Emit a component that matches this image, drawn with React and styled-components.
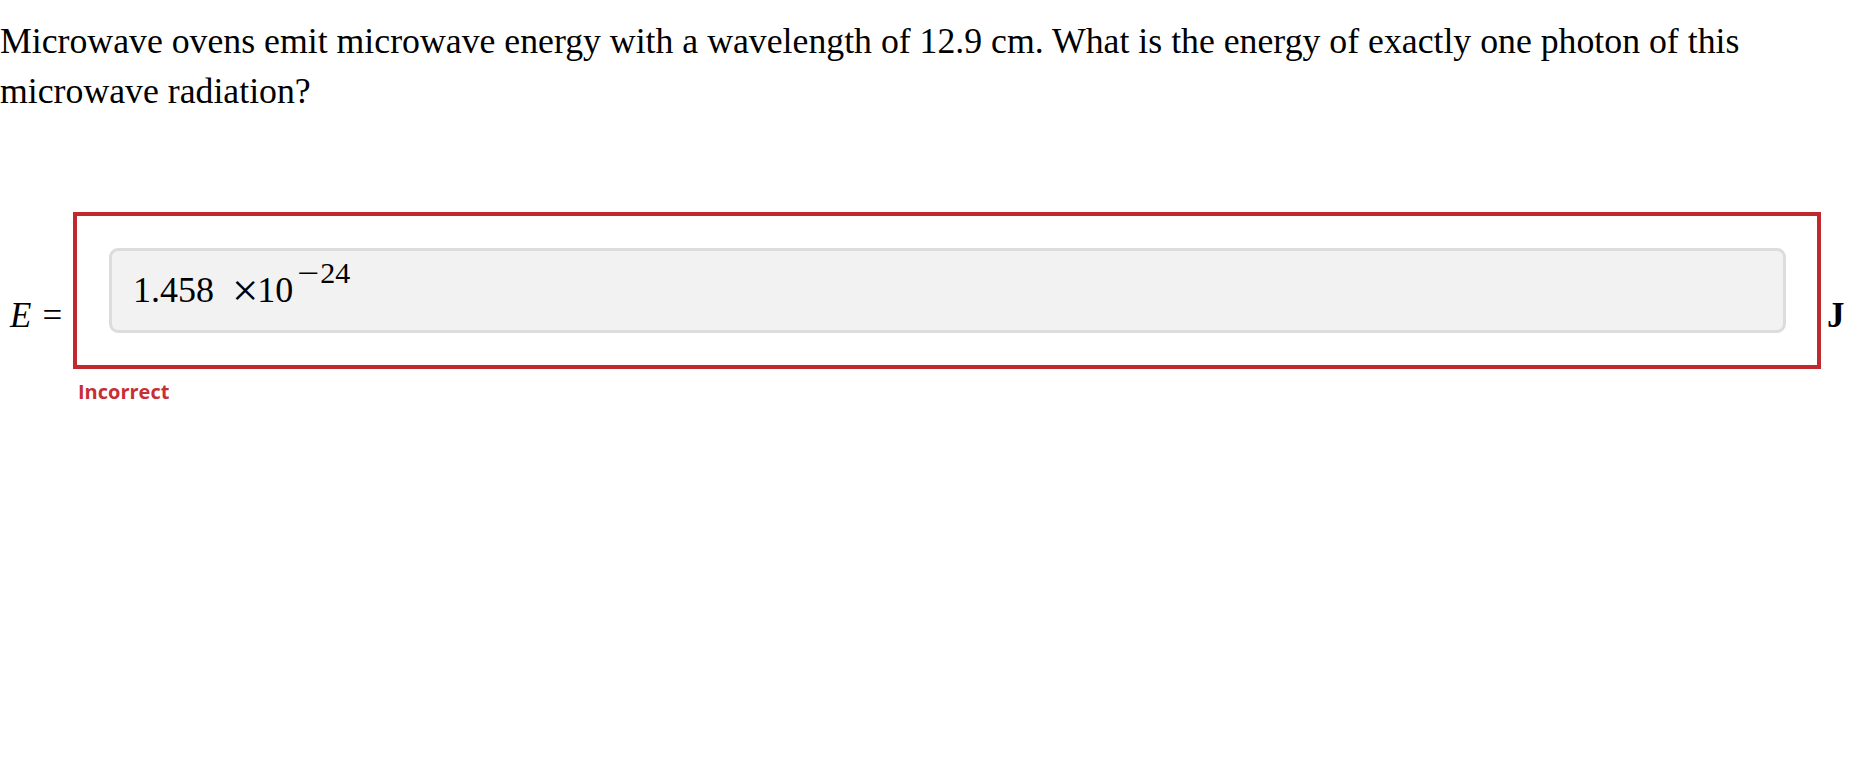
import React from 'react';
import styled, { createGlobalStyle } from 'styled-components';

const GlobalStyle = createGlobalStyle`
    html, body {
        margin: 0;
        padding: 0;
        background: #fff;
    }
    body {
        font-family: "Liberation Serif", "Times New Roman", serif;
        color: #000;
    }
    *, *::before, *::after {
        box-sizing: border-box;
    }
`;

const Page = styled.div`
    width: 1873px;
`;

const Question = styled.p`
    margin: 16px 0 0 0;
    font-size: 35.75px;
    line-height: 50px;
`;

const AnswerRow = styled.div`
    display: flex;
    align-items: flex-start;
    margin-top: 96px;
`;

const Label = styled.div`
    flex: none;
    width: ${(p) => p.width || 'auto'};
    margin-top: 84px;
    padding-left: ${(p) => p.padLeft || '0'};
    font-size: 35px;
    line-height: 40px;
    font-weight: ${(p) => (p.bold ? 'bold' : 'normal')};
    white-space: nowrap;
`;

const Var = styled.i`
    font-style: italic;
`;

const Equals = styled.span`
    margin-left: 11px;
`;

const AnswerColumn = styled.div`
    flex: none;
    width: 1748px;
    margin-right: 6px;
`;

const ResultBox = styled.div`
    border: 4px solid #c0292d;
    padding: 32px 31px 32px 32px;
`;

const Field = styled.div`
    height: 85px;
    background: #f2f2f2;
    border: 3px solid #dcdcdc;
    border-radius: 9px;
    padding: 7px 21px 0;
`;

const MathValue = styled.span`
    font-size: 36px;
    line-height: 1;
    white-space: nowrap;
`;

const Times = styled.span`
    display: inline-block;
    margin: 0 2px 0 21px;
    transform: scale(1.3);
`;

const Sup = styled.span`
    font-size: 30px;
    line-height: 1;
    vertical-align: 19px;
    margin-left: 7px;
`;

const Minus = styled.span`
    display: inline-block;
    transform: scaleX(1.3);
    margin-right: 3px;
`;

const Feedback = styled.div`
    margin: 9px 0 0 5px;
    font-family: "Open Sans", "Noto Sans", sans-serif;
    font-weight: 700;
    font-size: 20px;
    line-height: 28px;
    color: #c62f33;
`;

export default function App() {
    return (
        <Page>
            <GlobalStyle />
            <Question>
                Microwave ovens emit microwave energy with a wavelength of 12.9 cm. What is the energy of exactly one photon of this microwave radiation?
            </Question>
            <AnswerRow>
                <Label width="73px" padLeft="10px">
                    <Var>E</Var>
                    <Equals>=</Equals>
                </Label>
                <AnswerColumn>
                    <ResultBox>
                        <Field>
                            <MathValue>
                                1.458<Times>×</Times>10
                                <Sup>
                                    <Minus>−</Minus>24
                                </Sup>
                            </MathValue>
                        </Field>
                    </ResultBox>
                    <Feedback>Incorrect</Feedback>
                </AnswerColumn>
                <Label bold>J</Label>
            </AnswerRow>
        </Page>
    );
}
